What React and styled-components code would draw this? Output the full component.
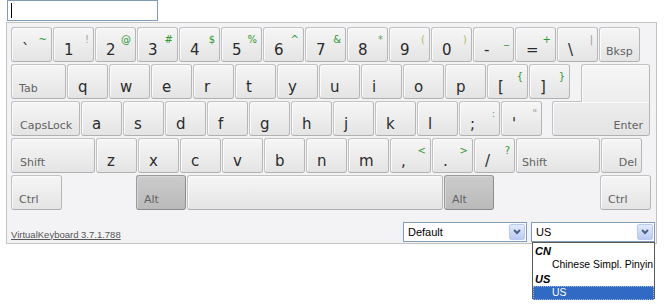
import React from 'react';
import styled, { createGlobalStyle } from 'styled-components';

const GlobalStyle = createGlobalStyle`
  html, body {
    margin: 0;
    padding: 0;
    background: #fff;
  }
  body {
    font-family: "DejaVu Sans", Verdana, sans-serif;
  }
`;

const Page = styled.div`
  padding: 0 0 0 6px;
  width: 666px;
  height: 308px;
  box-sizing: border-box;
`;

const FakeInput = styled.div`
  width: 151px;
  height: 21px;
  margin-left: 1px;
  box-sizing: border-box;
  border: 1px solid #7f9db9;
  background: #fff;
  padding: 2px 3px;
`;

const Caret = styled.span`
  display: block;
  width: 1px;
  height: 15px;
  background: #000;
`;

const Board = styled.div`
  margin-top: 1px;
  width: 651px;
  box-sizing: border-box;
  border: 1px solid #c3c3c3;
  background: #f3f3f5;
  padding: 4px 5px 1px 4px;
`;

const Row = styled.div`
  display: flex;
  align-items: flex-start;
  gap: 1px;
  height: 35px;
  margin-bottom: 2px;

  &:last-of-type {
    margin-bottom: 0;
  }
`;

const Key = styled.div`
  position: relative;
  flex-shrink: 0;
  box-sizing: border-box;
  width: ${(p) => p.$w || 41}px;
  height: 35px;
  margin-left: ${(p) => p.$ml || 0}px;
  display: flex;
  justify-content: ${(p) => (p.$right ? 'flex-end' : 'space-between')};
  border: 1px solid ${(p) => (p.$dark ? '#9a9a9a' : '#c2c2c2')};
  border-bottom-color: ${(p) => (p.$dark ? '#8a8a8a' : '#b0b0b0')};
  border-right-color: ${(p) => (p.$dark ? '#8e8e8e' : '#b6b6b6')};
  border-radius: 3px;
  background: ${(p) =>
    p.$dark
      ? 'linear-gradient(#cbcbcb, #bababa)'
      : 'linear-gradient(#f6f6f6, #e4e4e4)'};
  box-shadow: inset 1px 1px 0 ${(p) => (p.$dark ? '#d6d6d6' : '#fbfbfb')};
  padding: 6px 4px 3px 10px;
`;

const EnterTop = styled(Key)`
  height: 38px;
  z-index: 1;
  border-bottom: none;
  border-radius: 3px 3px 0 0;
  background: linear-gradient(#f6f6f6, #ededed);
`;

const EnterBottom = styled(Key)`
  border-radius: 3px 0 3px 3px;
  background: linear-gradient(#ededed, #e4e4e4);
  padding-right: 6px;
`;

const Main = styled.span`
  align-self: flex-end;
  font-size: 15px;
  line-height: 15px;
  color: #2b2b2b;
  white-space: pre;
`;

const Sup = styled.span`
  align-self: flex-start;
  font-size: 10px;
  line-height: 10px;
  margin-top: 1px;
  color: ${(p) => p.$c || '#2f9a2f'};
`;

const Label = styled.span`
  align-self: flex-end;
  font-size: 11px;
  line-height: 11px;
  color: #636363;
  margin-left: ${(p) => p.$ml ?? -4}px;
  margin-bottom: 1px;
  white-space: nowrap;
`;

const Spacer = styled.div`
  flex-shrink: 0;
  width: ${(p) => p.$w}px;
`;

const Footer = styled.div`
  display: flex;
  align-items: center;
  margin-top: 12px;
  margin-right: -4px;
  height: 20px;
`;

const Version = styled.a`
  flex: 1;
  font-family: "Liberation Sans", Arial, sans-serif;
  font-size: 9.5px;
  color: #555;
  text-decoration: underline;
  margin-top: 4px;
`;

const SelectWrap = styled.div`
  position: relative;
  margin-left: ${(p) => p.$ml || 0}px;
`;

const SelectBox = styled.div`
  width: 124px;
  height: 20px;
  box-sizing: border-box;
  border: 1px solid #7f9db9;
  background: #fff;
  display: flex;
  align-items: center;
  padding: 0 1px 0 4px;
  font-family: "Liberation Sans", Arial, sans-serif;
  font-size: 11px;
  color: #000;
`;

const SelectText = styled.span`
  flex: 1;
`;

const ArrowBtn = styled.span`
  width: 16px;
  height: 16px;
  box-sizing: border-box;
  border: 1px solid #b8caf0;
  border-radius: 2px;
  background: linear-gradient(#e3ebfd, #b9cbf5);
  display: flex;
  align-items: center;
  justify-content: center;
`;

const List = styled.div`
  position: absolute;
  left: 1px;
  top: 20px;
  width: 123px;
  height: 57px;
  box-sizing: border-box;
  border: 1px solid #5a5a5a;
  background: #fff;
  font-family: "Liberation Sans", Arial, sans-serif;
  font-size: 11px;
  color: #000;
  padding-top: 1px;
`;

const Group = styled.div`
  height: 14px;
  line-height: 14px;
  padding-left: 2px;
  font-weight: bold;
  font-style: italic;
`;

const Option = styled.div`
  height: 14px;
  line-height: 14px;
  padding-left: 19px;
  font-size: 10.4px;
  white-space: nowrap;
  overflow: hidden;
  background: ${(p) => (p.$sel ? '#316ac5' : 'transparent')};
  color: ${(p) => (p.$sel ? '#fff' : '#000')};
  outline: ${(p) => (p.$sel ? '1px dotted #9fb8e0' : 'none')};
  outline-offset: -1px;
`;

const Chevron = () => (
  <svg width="8" height="6" viewBox="0 0 8 6">
    <path d="M1 1 L4 4 L7 1" fill="none" stroke="#4d6185" strokeWidth="2" />
  </svg>
);

const supColor = {
  '!': '#a3a3a3',
  '|': '#9a9a9a',
  '"': '#a0a0a0',
  ':': '#6f9f6f',
  '(': '#b9b94a',
  ')': '#b9b94a',
  '*': '#5aa85a',
};

const CharKey = ({ main, sup }) => (
  <Key>
    <Main>{main}</Main>
    {sup && <Sup $c={supColor[sup]}>{sup}</Sup>}
  </Key>
);

const row1 = [
  ['`', '~'], ['1', '!'], ['2', '@'], ['3', '#'], ['4', '$'], ['5', '%'],
  ['6', '^'], ['7', '&'], ['8', '*'], ['9', '('], ['0', ')'], ['-', '_'],
  ['=', '+'], ['\\', '|'],
];
const row2 = [
  ['q'], ['w'], ['e'], ['r'], ['t'], ['y'], ['u'], ['i'], ['o'], ['p'],
  ['[', '{'], [']', '}'],
];
const row3 = [
  ['a'], ['s'], ['d'], ['f'], ['g'], ['h'], ['j'], ['k'], ['l'],
  [';', ':'], ['\'', '"'],
];
const row4 = [
  ['z'], ['x'], ['c'], ['v'], ['b'], ['n'], ['m'], [',', '<'], ['.', '>'],
  ['/', '?'],
];

const keys = (list) => list.map(([m, s], i) => <CharKey key={i} main={m} sup={s} />);

export default function App() {
  return (
    <Page>
      <GlobalStyle />
      <FakeInput>
        <Caret />
      </FakeInput>
      <Board>
        <Row>
          {keys(row1)}
          <Key><Label>Bksp</Label></Key>
        </Row>
        <Row>
          <Key $w={55}><Label $ml={-3}>Tab</Label></Key>
          {keys(row2)}
          <EnterTop $w={69} $ml={10} />
        </Row>
        <Row>
          <Key $w={69}><Label $ml={-2}>CapsLock</Label></Key>
          {keys(row3)}
          <EnterBottom $w={98} $ml={9} $right><Label $ml={0}>Enter</Label></EnterBottom>
        </Row>
        <Row>
          <Key $w={84}><Label $ml={-2}>Shift</Label></Key>
          {keys(row4)}
          <Key $w={84}><Label $ml={-5}>Shift</Label></Key>
          <Key $right><Label $ml={0}>Del</Label></Key>
        </Row>
        <Row>
          <Key $w={51}><Label $ml={-3}>Ctrl</Label></Key>
          <Spacer $w={72} />
          <Key $w={50} $dark><Label $ml={-3}>Alt</Label></Key>
          <Key $w={256} />
          <Key $w={50} $dark><Label $ml={-3}>Alt</Label></Key>
          <Spacer $w={104} />
          <Key $w={51}><Label $ml={-3}>Ctrl</Label></Key>
        </Row>
        <Footer>
          <Version href="#">VirtualKeyboard 3.7.1.788</Version>
          <SelectWrap>
            <SelectBox>
              <SelectText>Default</SelectText>
              <ArrowBtn><Chevron /></ArrowBtn>
            </SelectBox>
          </SelectWrap>
          <SelectWrap $ml={4}>
            <SelectBox>
              <SelectText>US</SelectText>
              <ArrowBtn><Chevron /></ArrowBtn>
            </SelectBox>
            <List>
              <Group>CN</Group>
              <Option>Chinese Simpl. Pinyin</Option>
              <Group>US</Group>
              <Option $sel>US</Option>
            </List>
          </SelectWrap>
        </Footer>
      </Board>
    </Page>
  );
}
